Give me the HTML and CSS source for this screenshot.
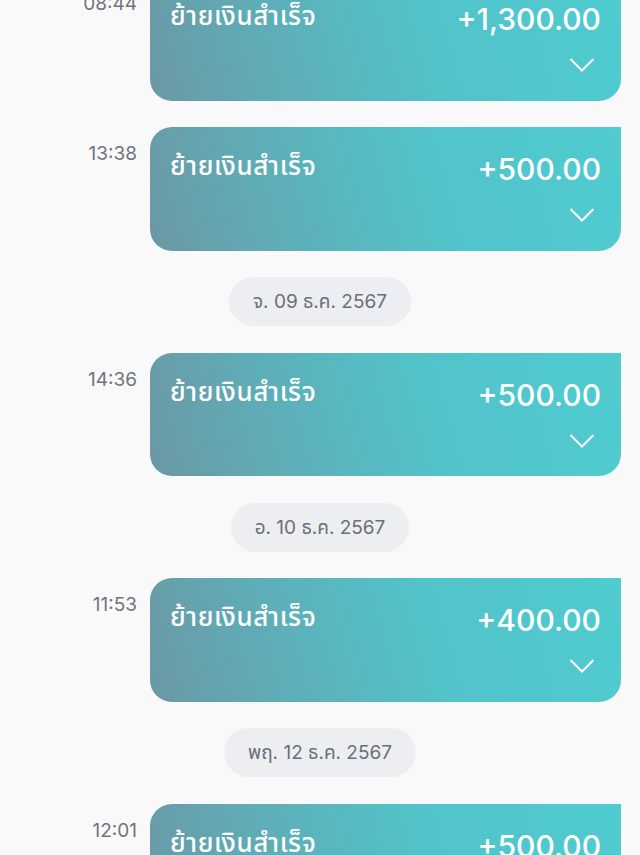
FILE: index.html
```html
<!DOCTYPE html>
<html lang="th">
<head>
<meta charset="utf-8">
<link rel="stylesheet" href="styles.css">
</head>
<body>
<div class="feed">
  <div class="row">
    <div class="time">08:44</div>
    <div class="card">
      <div class="card-top"><span class="title">ย้ายเงินสำเร็จ</span><span class="amount">+1,300.00</span></div>
      <div class="card-bottom"><svg class="chev" viewBox="0 0 26 16"><path d="M1.5 2 L13 13.5 L24.5 2" /></svg></div>
    </div>
  </div>
  <div class="row">
    <div class="time">13:38</div>
    <div class="card">
      <div class="card-top"><span class="title">ย้ายเงินสำเร็จ</span><span class="amount">+500.00</span></div>
      <div class="card-bottom"><svg class="chev" viewBox="0 0 26 16"><path d="M1.5 2 L13 13.5 L24.5 2" /></svg></div>
    </div>
  </div>
  <div class="date"><span class="pill">จ. 09 ธ.ค. 2567</span></div>
  <div class="row">
    <div class="time">14:36</div>
    <div class="card">
      <div class="card-top"><span class="title">ย้ายเงินสำเร็จ</span><span class="amount">+500.00</span></div>
      <div class="card-bottom"><svg class="chev" viewBox="0 0 26 16"><path d="M1.5 2 L13 13.5 L24.5 2" /></svg></div>
    </div>
  </div>
  <div class="date"><span class="pill">อ. 10 ธ.ค. 2567</span></div>
  <div class="row">
    <div class="time">11:53</div>
    <div class="card">
      <div class="card-top"><span class="title">ย้ายเงินสำเร็จ</span><span class="amount">+400.00</span></div>
      <div class="card-bottom"><svg class="chev" viewBox="0 0 26 16"><path d="M1.5 2 L13 13.5 L24.5 2" /></svg></div>
    </div>
  </div>
  <div class="date"><span class="pill">พฤ. 12 ธ.ค. 2567</span></div>
  <div class="row">
    <div class="time">12:01</div>
    <div class="card">
      <div class="card-top"><span class="title">ย้ายเงินสำเร็จ</span><span class="amount">+500.00</span></div>
      <div class="card-bottom"><svg class="chev" viewBox="0 0 26 16"><path d="M1.5 2 L13 13.5 L24.5 2" /></svg></div>
    </div>
  </div>
</div>
</body>
</html>
```
FILE: styles.css
```css
html, body {
  margin: 0;
  padding: 0;
  background: #f9f9fa;
  height: 855px;
  overflow: hidden;
}
body {
  font-family: Inter, "Noto Sans", "Noto Sans Thai", sans-serif;
}
.feed {
  margin-top: -23px;
  display: flex;
  flex-direction: column;
  gap: 26.5px;
}
.row {
  display: flex;
  align-items: flex-start;
}
.time {
  flex: none;
  width: 150px;
  box-sizing: border-box;
  text-align: right;
  padding-top: 15px;
  padding-right: 13px;
  font-size: 19px;
  line-height: 24px;
  color: #6f7480;
}
.card {
  flex: 1;
  margin-right: 19px;
  height: 123.5px;
  box-sizing: border-box;
  border-radius: 22px 0 22px 22px;
  background: linear-gradient(75deg, #6b98a3 0%, #5eaeb8 28%, #52c2c9 58%, #4fccd1 100%);
  padding: 24px 20px 0 20px;
  color: #fff;
  display: flex;
  flex-direction: column;
}
.card-top {
  display: flex;
  justify-content: space-between;
  align-items: center;
  height: 36px;
}
.title {
  font-size: 26px;
  font-weight: 500;
  line-height: 30px;
  letter-spacing: 0.6px;
  margin-top: -6px;
}
.amount {
  font-size: 30px;
  font-weight: 500;
  line-height: 36px;
}
.card-bottom {
  display: flex;
  justify-content: flex-end;
  padding-top: 20px;
  padding-right: 6px;
}
.chev {
  width: 26px;
  height: 16px;
  fill: none;
  stroke: #ffffff;
  stroke-width: 2;
}
.date {
  display: flex;
  justify-content: center;
}
.pill {
  background: #eceef2;
  color: #6b6f7a;
  font-size: 19px;
  line-height: 49px;
  height: 49px;
  padding: 0 24px;
  border-radius: 25px;
}
```
